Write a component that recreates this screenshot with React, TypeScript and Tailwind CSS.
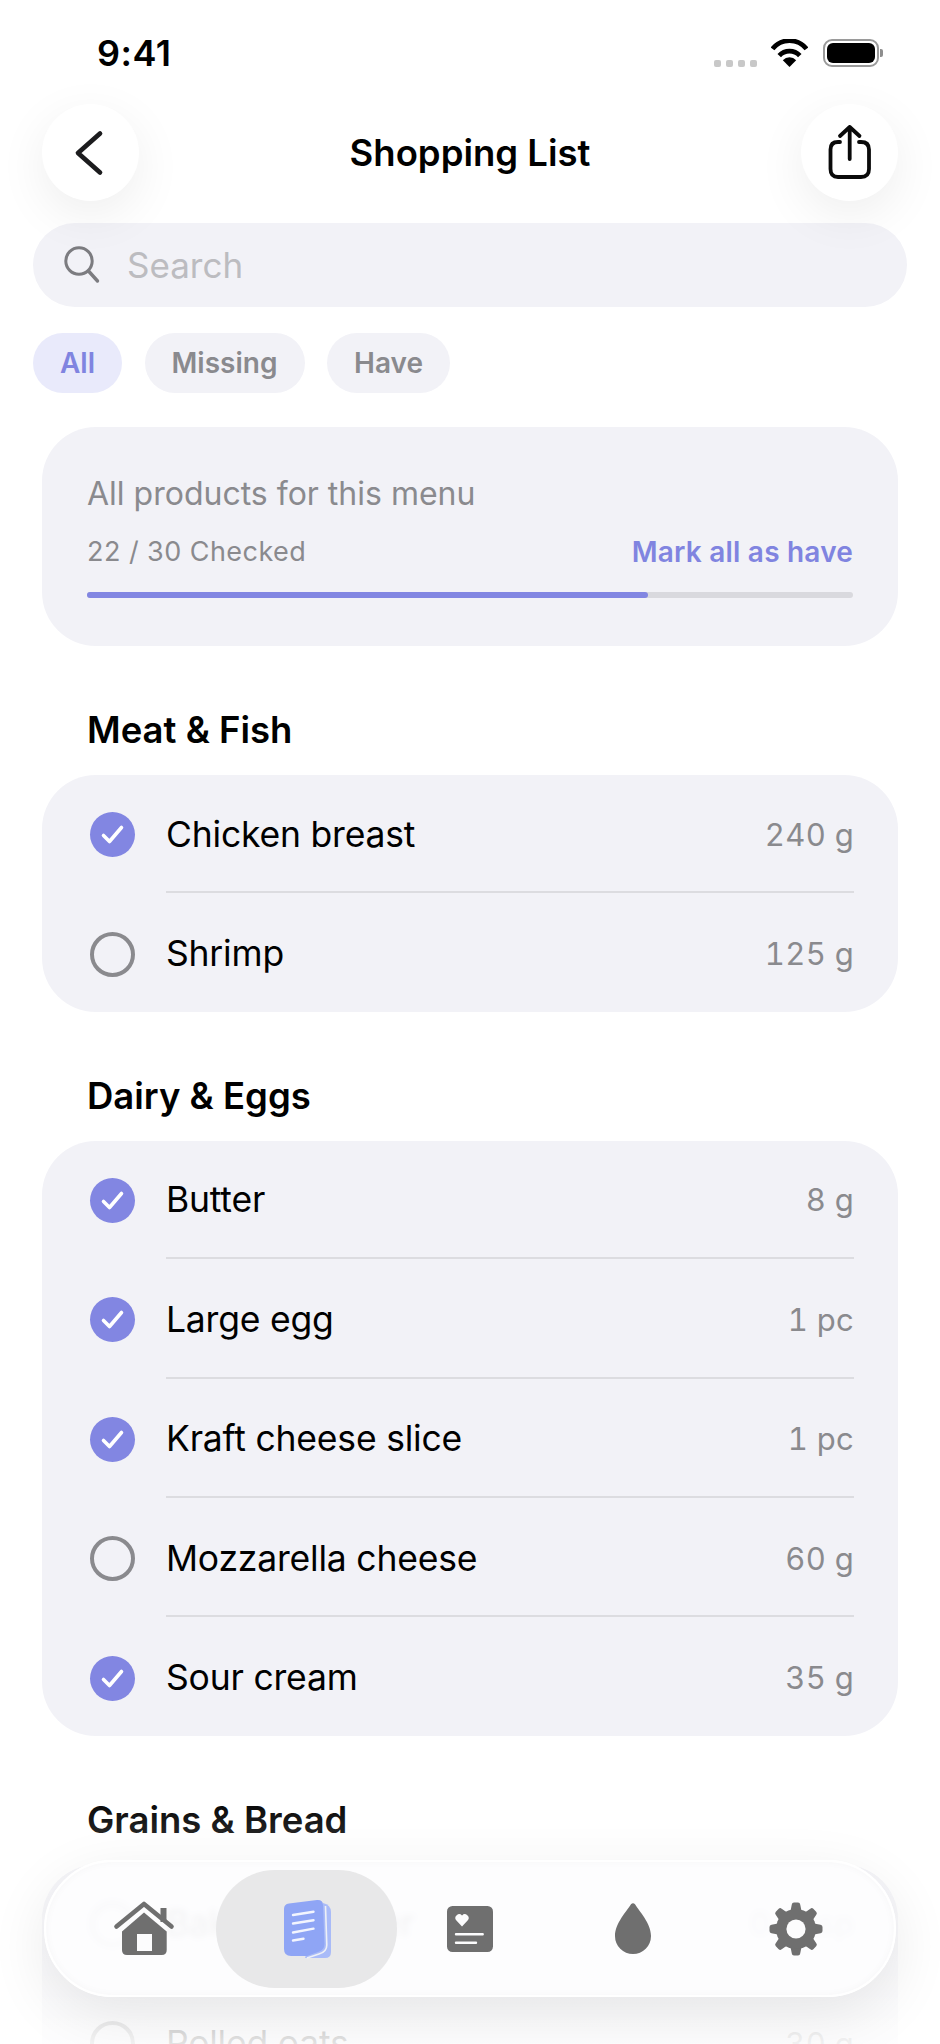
import React from "react";

type Item = { name: string; amount: string; checked: boolean };

const meat: Item[] = [
  { name: "Chicken breast", amount: "240 g", checked: true },
  { name: "Shrimp", amount: "125 g", checked: false },
];
const dairy: Item[] = [
  { name: "Butter", amount: "8 g", checked: true },
  { name: "Large egg", amount: "1 pc", checked: true },
  { name: "Kraft cheese slice", amount: "1 pc", checked: true },
  { name: "Mozzarella cheese", amount: "60 g", checked: false },
  { name: "Sour cream", amount: "35 g", checked: true },
];
const grains: Item[] = [
  { name: "Baking powder", amount: "0.5 tsp", checked: false },
  { name: "Rolled oats", amount: "30 g", checked: false },
];

function Check({ checked }: { checked: boolean }) {
  if (!checked) {
    return <div className="h-[45px] w-[45px] shrink-0 rounded-full border-[4.5px] border-[#8a8a8e]" />;
  }
  return (
    <div className="h-[45px] w-[45px] shrink-0 rounded-full bg-[#8286e2]">
      <svg width="45" height="45" viewBox="0 0 45 45" fill="none">
        <path d="M13.5 23.5 L19.5 29.5 L31.5 15.5" stroke="#fff" strokeWidth="3.6" strokeLinecap="round" strokeLinejoin="round" />
      </svg>
    </div>
  );
}

function Section({ title, items }: { title: string; items: Item[] }) {
  return (
    <section className="mt-[58px]">
      <h2 className="mb-[21px] h-[50px] pl-[87px] pt-[1px] text-[36.5px] leading-[50px] font-semibold text-black">{title}</h2>
      <div className="mx-[42px] overflow-hidden rounded-[54px] bg-[#f2f2f7] pl-[48px] pr-[44px]">
        {items.map((it, i) => (
          <div key={it.name}>
            {i > 0 && <div className="ml-[76px] h-[2px] -translate-y-[1px] bg-[#dcdce0]" />}
            <div className="flex h-[117.4px] items-center pt-[2px]">
              <Check checked={it.checked} />
              <span className="ml-[31px] flex-1 text-[35.5px] leading-[44px] tracking-[-0.2px] text-black">{it.name}</span>
              <span className="text-[31px] leading-[40px] tracking-[0.3px] tabular-nums text-[#8a8a8e]">{it.amount}</span>
            </div>
          </div>
        ))}
      </div>
    </section>
  );
}

function Home() {
  return (
    <svg width="66" height="58" viewBox="0 0 66 58" fill="none">
      <path d="M49.5 8 H55.5 V22 H49.5 Z" fill="#6f6f6f" />
      <path d="M5.5 26.5 L33 4 L60.5 26.5" stroke="#6f6f6f" strokeWidth="4.6" strokeLinecap="round" strokeLinejoin="round" />
      <path d="M11 31.5 L33 12.5 L55.7 31.5 V50 Q55.7 55 50.7 55 H16 Q11 55 11 50 Z" fill="#6f6f6f" />
      <rect x="26" y="34" width="15" height="17" fill="#fcfcfd" />
    </svg>
  );
}

function Doc() {
  return (
    <svg width="52" height="62" viewBox="30 38 52 62" fill="none">
      <path d="M72 43 Q80 45 80 52 L80 92 Q80 98 74 98 L54 98 Z" fill="#a9bbf8" />
      <path d="M33 49 Q33 44 38 43.5 L66 40 Q72 39.6 72 45 L73.5 84 Q73.5 90 67 92 L56 96 L40 96 Q33 96 33 89 Z" fill="#8fa5f5" />
      <path d="M74.5 46 L75.8 85 Q75.8 92 68 94 L56 98" stroke="#eef0f6" strokeWidth="1.6" fill="none" />
      <g stroke="#f3f5fe" strokeWidth="2.4" strokeLinecap="round">
        <path d="M42 55 L62.5 51.8" />
        <path d="M42 63.5 L62.5 60.2" />
        <path d="M42 72.5 L62.5 68.6" />
        <path d="M42 80.5 L52.5 78.8" />
      </g>
    </svg>
  );
}

function Notes() {
  return (
    <svg width="46" height="46" viewBox="0 0 46 46" fill="none">
      <rect width="46" height="46" rx="5.5" fill="#6f6f6f" />
      <path d="M15 20.5 L9.4 14.6 A3.7 3.7 0 0 1 15 9.6 A3.7 3.7 0 0 1 20.6 14.6 Z" fill="#fcfcfd" />
      <path d="M9 28.3 H35.7 M9 36.7 H29" stroke="#fcfcfd" strokeWidth="2.4" strokeLinecap="round" />
    </svg>
  );
}

function Drop() {
  return (
    <svg width="36" height="51" viewBox="0 0 36 51" fill="none">
      <path d="M16 1.2 Q18 -0.6 20 1.2 C24 8 36 20 36 33 A18 18 0 0 1 0 33 C0 20 12 8 16 1.2 Z" fill="#6f6f6f" />
    </svg>
  );
}

function Gear() {
  const angles = [0, 45, 90, 135, 180, 225, 270, 315];
  return (
    <svg width="54" height="54" viewBox="-27 -27 54 54" fill="none">
      {angles.map((a) => (
        <path key={a} d="M-5.5 -18 L-4.2 -24.5 Q-4 -26.5 -2 -26.5 H2 Q4 -26.5 4.2 -24.5 L5.5 -18 Z" fill="#6f6f6f" transform={`rotate(${a})`} />
      ))}
      <circle r="20" fill="#6f6f6f" />
      <circle r="9.6" fill="#fcfcfd" />
    </svg>
  );
}

export default function App() {
  return (
    <div className="relative h-[2044px] w-[940px] overflow-hidden bg-white font-['Inter',sans-serif]">
      {/* status bar */}
      <div className="relative z-10 flex h-[104px] items-start justify-between pl-[97px] pr-[57px] pt-[32px]">
        <span className="text-[36px] leading-[42px] font-semibold tracking-[0.5px] text-black">9:41</span>
        <div className="flex items-start">
          <div className="mt-[28px] flex gap-[5px]">
            <span className="h-[7px] w-[7px] rounded-[2px] bg-[#c8c8c8]" />
            <span className="h-[7px] w-[7px] rounded-[2px] bg-[#c8c8c8]" />
            <span className="h-[7px] w-[7px] rounded-[2px] bg-[#c8c8c8]" />
            <span className="h-[7px] w-[7px] rounded-[2px] bg-[#c8c8c8]" />
          </div>
          <svg className="ml-[14px] mt-[7px]" width="37" height="28" viewBox="0 0 36 27" fill="none">
            <path d="M1.5 9.5 A21 21 0 0 1 34.5 9.5" stroke="#000" strokeWidth="4.6" />
            <path d="M8 16 A13.5 13.5 0 0 1 28 16" stroke="#000" strokeWidth="4.6" />
            <path d="M18 27 L11.5 20.5 A9 9 0 0 1 24.5 20.5 Z" fill="#000" />
          </svg>
          <div className="ml-[15px] mt-[7px] flex items-center">
            <div className="h-[28px] w-[56px] rounded-[9px] border-2 border-[#9a9a9a] p-[2px]">
              <div className="h-full w-full rounded-[6px] bg-black" />
            </div>
            <div className="ml-[1px] h-[8px] w-[3px] rounded-r-[2px] bg-[#8e8e8e]" />
          </div>
        </div>
      </div>

      {/* header */}
      <div className="relative z-10 mx-[42px] flex h-[97px] items-center justify-between">
        <button className="flex h-[97px] w-[97px] items-center justify-center rounded-full bg-white shadow-[0_14px_50px_rgba(0,0,0,0.07)]">
          <svg className="mr-[3px]" width="30" height="46" viewBox="0 0 30 46" fill="none">
            <path d="M26 3.5 L4 23 L26 42.5" stroke="#1c1c1e" strokeWidth="4.7" strokeLinecap="round" strokeLinejoin="round" />
          </svg>
        </button>
        <h1 className="text-[36.5px] leading-[44px] font-semibold text-black">Shopping List</h1>
        <button className="flex h-[97px] w-[97px] items-center justify-center rounded-full bg-white shadow-[0_14px_50px_rgba(0,0,0,0.07)]">
          <svg width="50" height="60" viewBox="0 0 50 60" fill="none">
            <path d="M15 19 H13 Q5.5 19 5.5 26.5 V46 Q5.5 54 13 54 H36 Q44 54 44 46 V26.5 Q44 19 36 19 H34" stroke="#0a0a0a" strokeWidth="3.8" strokeLinecap="round" />
            <path d="M24.7 36 V4 M15 13 L24.7 4 L34.5 13" stroke="#0a0a0a" strokeWidth="3.8" strokeLinecap="round" strokeLinejoin="round" />
          </svg>
        </button>
      </div>

      {/* search */}
      <div className="mx-[33px] mt-[22px] flex h-[84px] items-center rounded-full bg-[#f2f2f7] pl-[30px]">
        <svg width="38" height="40" viewBox="0 0 38 40" fill="none">
          <circle cx="16" cy="16" r="13.2" stroke="#7c7c80" strokeWidth="3" />
          <path d="M25.5 26 L34.5 36" stroke="#7c7c80" strokeWidth="3.4" strokeLinecap="round" />
        </svg>
        <span className="ml-[26px] text-[35px] leading-[44px] text-[#bcbcc0]">Search</span>
      </div>

      {/* chips */}
      <div className="mx-[33px] mt-[26px] flex gap-[22.5px]">
        <span className="flex h-[60px] w-[89px] items-center justify-center rounded-full bg-[#e9eafb] text-[28px] font-semibold text-[#8084e0]">All</span>
        <span className="flex h-[60px] w-[160px] items-center justify-center rounded-full bg-[#f2f2f7] text-[28px] font-semibold text-[#8a8a8e]">Missing</span>
        <span className="flex h-[60px] w-[123px] items-center justify-center rounded-full bg-[#f2f2f7] text-[28px] font-semibold text-[#8a8a8e]">Have</span>
      </div>

      {/* summary */}
      <div className="mx-[42px] mt-[34px] rounded-[54px] bg-[#f2f2f7] px-[45px] pb-[48px] pt-[46px]">
        <div className="text-[32px] leading-[41px] text-[#8a8a8e]">All products for this menu</div>
        <div className="mt-[20px] flex h-[36px] items-center justify-between">
          <span className="text-[27px] tracking-[0.45px] text-[#8a8a8e]">22 / 30 Checked</span>
          <span className="text-[28px] font-semibold tracking-[0.2px] text-[#8084e0]">Mark all as have</span>
        </div>
        <div className="mt-[22px] h-[6px] rounded-full bg-[#d9d9de]">
          <div className="h-full w-[561px] rounded-full bg-[#8286e2]" />
        </div>
      </div>

      <Section title="Meat & Fish" items={meat} />
      <Section title="Dairy & Eggs" items={dairy} />
      <Section title="Grains & Bread" items={grains} />

      {/* bottom fade */}
      <div className="pointer-events-none absolute inset-x-0 bottom-0 h-[250px] bg-gradient-to-b from-white/0 to-white/90" />

      {/* tab bar */}
      <nav className="absolute bottom-[47px] left-[44px] flex h-[137px] w-[852px] items-center rounded-full border-2 border-white bg-[#fdfdfe]/92 px-[16px] shadow-[0_18px_60px_rgba(0,0,0,0.09),inset_0_0_8px_rgba(0,0,0,0.03)] backdrop-blur-[3px]">
        <div className="flex flex-1 justify-center"><Home /></div>
        <div className="relative flex flex-1 justify-center">
          <div className="absolute -inset-x-[9px] -top-[28px] h-[118px] rounded-full bg-[#e8e8e9]" />
          <div className="relative"><Doc /></div>
        </div>
        <div className="flex flex-1 justify-center"><Notes /></div>
        <div className="flex flex-1 justify-center"><Drop /></div>
        <div className="flex flex-1 justify-center"><Gear /></div>
      </nav>
    </div>
  );
}
